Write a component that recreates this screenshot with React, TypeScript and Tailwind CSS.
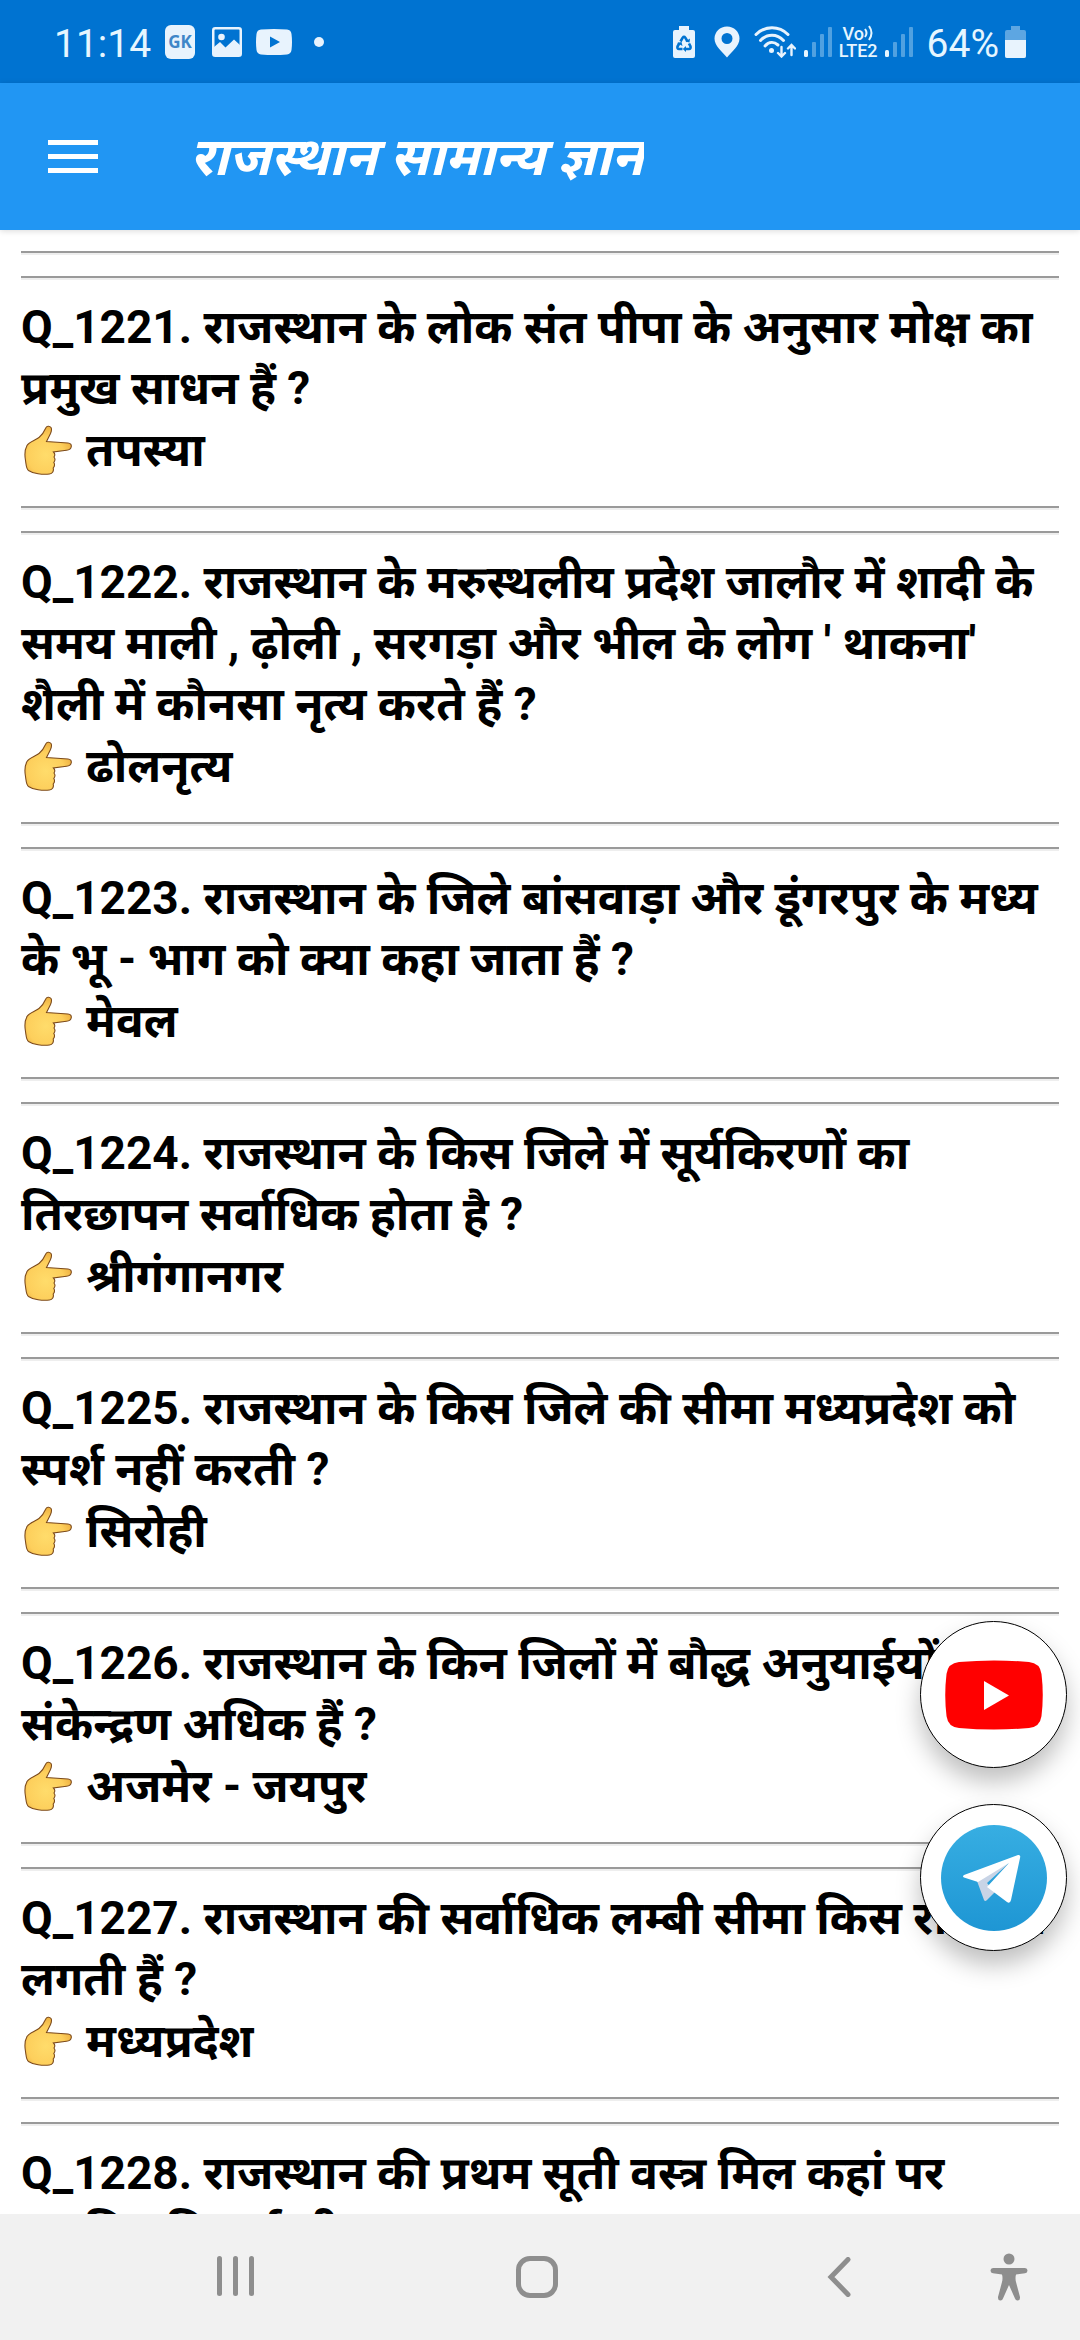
import type { ReactNode } from "react";

type Item = { no: number; q: string; a: string };

const items: Item[] = [
  { no: 1221, q: "राजस्थान के लोक संत पीपा के अनुसार मोक्ष का प्रमुख साधन हैं ?", a: "तपस्या" },
  { no: 1222, q: "राजस्थान के मरुस्थलीय प्रदेश जालौर में शादी के समय माली , ढ़ोली , सरगड़ा और भील के लोग ' थाकना' शैली में कौनसा नृत्य करते हैं ?", a: "ढोलनृत्य" },
  { no: 1223, q: "राजस्थान के जिले बांसवाड़ा और डूंगरपुर के मध्य के भू - भाग को क्या कहा जाता हैं ?", a: "मेवल" },
  { no: 1224, q: "राजस्थान के किस जिले में सूर्यकिरणों का तिरछापन सर्वाधिक होता है ?", a: "श्रीगंगानगर" },
  { no: 1225, q: "राजस्थान के किस जिले की सीमा मध्यप्रदेश को स्पर्श नहीं करती ?", a: "सिरोही" },
  { no: 1226, q: "राजस्थान के किन जिलों में बौद्ध अनुयाईयों का संकेन्द्रण अधिक हैं ?", a: "अजमेर - जयपुर" },
  { no: 1227, q: "राजस्थान की सर्वाधिक लम्बी सीमा किस राज्य से लगती हैं ?", a: "मध्यप्रदेश" },
  { no: 1228, q: "राजस्थान की प्रथम सूती वस्त्र मिल कहां पर स्थापित कि गई थी ?", a: "" },
];

function Rule() {
  return <hr className="h-1 border-0 border-t-2 border-b-2 border-t-[#9a9a9a] border-b-[#eeeeee]" />;
}

function Hand() {
  return (
    <svg role="img" aria-label="उत्तर" viewBox="0 0 50 50" className="ml-[3px] h-[50px] w-[50px] shrink-0">
      <defs>
        <radialGradient id="skin" cx="0.45" cy="0.6" r="0.6">
          <stop offset="0" stopColor="#ffdc6b" />
          <stop offset="0.65" stopColor="#fdcf5c" />
          <stop offset="1" stopColor="#eeb040" />
        </radialGradient>
      </defs>
      <path
        d="M21.500 3.500C22.500 0.800 25.500 0.500 27 2.500C28 4 27.500 6 26.500 8.500L22.500 16.500L44 18C46.500 18.200 47.500 19.800 47.300 21.500C47 24 45 25 42.500 25.200L29.500 27C31 28.500 31 30.500 30 32C31.500 34 31 36 29.800 37.500C31 39.500 30.500 41.500 29.200 43C30 46 28.500 48.700 25.500 49C18.500 50 9 48.500 4.500 45.500C2 43.500 2.200 39.500 1.500 35.500C0.500 30 0.800 24.500 3 20.500C5 17 11 15.500 15 12.500C18 10.200 20 7 21.500 3.500Z"
        fill="url(#skin)"
        stroke="#7d4b1c"
        strokeWidth="1.100"
      />
    </svg>
  );
}

function Bars() {
  return (
    <svg viewBox="0 0 28 32" className="h-8 w-7" fill="#e6f6ff" aria-hidden="true">
      <rect x="0" y="24" width="4" height="7" rx="1.500" />
      <g opacity="0.35">
        <rect x="8" y="16" width="4" height="15" rx="1" />
        <rect x="16" y="8" width="4" height="23" rx="1" />
        <rect x="24" y="1" width="4" height="30" rx="1" />
      </g>
    </svg>
  );
}

function StatusBar() {
  return (
    <div className="flex h-[83px] shrink-0 items-center justify-between bg-[#0073d1] px-[54px] text-[#e6f6ff]">
      <div className="flex items-center">
        <span className="mt-1 text-[39px] leading-[46px]">11:14</span>
        <span className="ml-[14px] flex h-[34px] w-[30px] items-center justify-center rounded-[6px] bg-[#e8f3fd] font-['Open_Sans'] text-[17px] leading-none font-bold text-[#3f86c8]">GK</span>
        <svg viewBox="0 0 30 30" className="ml-[17px] h-[30px] w-[30px]" aria-hidden="true">
          <rect x="1.250" y="1.250" width="27.500" height="27.500" rx="2" fill="none" stroke="#e8f3fd" strokeWidth="2.500" />
          <circle cx="9.500" cy="10" r="3.300" fill="#e8f3fd" />
          <path d="M2 20L8 15L13.500 20.500L22 12.500L28 18V28H2Z" fill="#e8f3fd" />
        </svg>
        <svg viewBox="0 0 36 26" className="ml-[14px] h-[26px] w-9" aria-hidden="true">
          <path fillRule="evenodd" fill="#e8f3fd" d="M5 0.600Q18 -0.500 31 0.600Q35 1 35.500 5Q36.500 13 35.500 21Q35 25 31 25.400Q18 26.500 5 25.400Q1 25 0.500 21Q-0.500 13 0.500 5Q1 1 5 0.600ZM14 7.500V18.500L24 13Z" />
        </svg>
        <span className="ml-[22px] h-[10px] w-[10px] rounded-full bg-[#e8f3fd]" />
      </div>
      <div className="flex items-center">
        <svg viewBox="0 0 22 32" className="h-8 w-[22px]" aria-hidden="true">
          <path d="M6 0H16V4H20Q22 4 22 6V30Q22 32 20 32H2Q0 32 0 30V6Q0 4 2 4H6Z" fill="#e8f3fd" />
          <g fill="none" stroke="#0073d1" strokeWidth="2.600">
            <path d="M7.500 15.500L9.700 11.700Q11 10 12.300 11.700L14.500 15.500" />
            <path d="M16 17.500L17.500 20.500Q18 23 16 23H12.500" />
            <path d="M9.500 23H6Q4 23 4.500 20.500L6.500 17" />
          </g>
          <path d="M12.500 15.500L16.500 16.500L17 12.500ZM13 20V26L9.800 23ZM4 17L8.500 16L9.500 20Z" fill="#0073d1" />
        </svg>
        <svg viewBox="0 0 26 32" className="ml-[19px] h-8 w-[26px]" aria-hidden="true">
          <path fillRule="evenodd" fill="#e8f3fd" d="M13 0.500C6 0.500 0.500 6 0.500 12.500C0.500 20 8 25.500 13 31.500C18 25.500 25.500 20 25.500 12.500C25.500 6 20 0.500 13 0.500ZM13 7A5.500 5.500 0 1 1 13 18A5.500 5.500 0 1 1 13 7Z" />
        </svg>
        <svg viewBox="0 0 42 32" className="ml-[14px] h-8 w-[42px]" aria-hidden="true" fill="none" stroke="#e8f3fd" strokeWidth="3" strokeLinecap="round">
          <path d="M2 8.500C11 -0.500 25 -0.500 34 8.500" />
          <path d="M6.500 14.500C13 7.500 23 7.500 29.500 14.500" />
          <path d="M11 20C15 15.500 20 15.500 24 19" />
          <circle cx="17.500" cy="24.500" r="2.500" fill="#e8f3fd" stroke="none" />
          <path d="M27.500 21V30M24 27L27.500 30.500L31 27M37.500 29V19.500M34 22.500L37.500 19L41 22.500" strokeWidth="2.400" />
        </svg>
        <span className="ml-2"><Bars /></span>
        <span className="ml-[7px] flex flex-col items-center text-[18px] leading-[17px] font-medium">
          <span className="flex items-center">
            Vo
            <svg viewBox="0 0 10 16" className="h-4 w-[10px]" fill="none" stroke="#e6f6ff" strokeWidth="2" aria-hidden="true">
              <path d="M1 4Q4 8 1 12M5 1Q10 8 5 15" />
            </svg>
          </span>
          <span>LTE2</span>
        </span>
        <span className="ml-[7px]"><Bars /></span>
        <span className="mt-1 ml-[14px] text-[39px] leading-[46px]">64%</span>
        <svg viewBox="0 0 21 32" className="ml-[6px] h-8 w-[21px]" aria-hidden="true">
          <path d="M6 0H15V4H19Q21 4 21 6V30Q21 32 19 32H2Q0 32 0 30V6Q0 4 2 4H6Z" fill="#e8f3fd" opacity="0.4" />
          <path d="M0 14H21V30Q21 32 19 32H2Q0 32 0 30Z" fill="#e8f3fd" />
        </svg>
      </div>
    </div>
  );
}

function Fab({ label, children }: { label: string; children: ReactNode }) {
  return (
    <a href="#" aria-label={label} className="flex h-[147px] w-[147px] items-center justify-center rounded-full border border-black bg-white shadow-[0_14px_24px_rgba(0,0,0,0.25)]">
      {children}
    </a>
  );
}

export default function App() {
  return (
    <div className="flex h-screen flex-col bg-white font-['Roboto','Noto_Sans_Devanagari','Noto_Sans',sans-serif] text-black">
      <StatusBar />
      <header className="z-10 flex h-[147px] shrink-0 items-center bg-[#2196f3] pl-12 text-white shadow-[0_1px_6px_rgba(0,0,0,0.15)]">
        <button aria-label="Menu" className="flex h-12 w-[50px] flex-col justify-center gap-[9px]">
          <span className="h-[5px] bg-white" />
          <span className="h-[5px] bg-white" />
          <span className="h-[5px] bg-white" />
        </button>
        <h1 className="ml-[92px] overflow-hidden text-[53px] leading-[70px] font-bold italic">राजस्थान सामान्य ज्ञान</h1>
      </header>
      <main className="relative min-h-0 flex-1">
        <div className="flex h-full flex-col gap-[25px] overflow-hidden px-[21px] pt-[21px] text-[46px] font-bold">
          {items.map((it) => (
            <article key={it.no} className="shrink-0">
              <div className="flex flex-col gap-[21px]">
                <Rule />
                <Rule />
              </div>
              <div className="mt-[17px]">
                <p className="-mr-2 leading-[61px]">{`Q_${it.no}. ${it.q}`}</p>
                {it.a && (
                  <p className="flex items-center leading-[62px]">
                    <Hand />
                    <span className="ml-3">{it.a}</span>
                  </p>
                )}
              </div>
            </article>
          ))}
        </div>
        <div className="absolute right-[13px] bottom-[263px] flex flex-col gap-9">
          <Fab label="YouTube">
            <svg viewBox="0 0 98 70" className="h-[70px] w-[98px]" aria-hidden="true">
              <path d="M14 2Q49 -1 84 2Q95 3 96.500 14Q99 35 96.500 56Q95 67 84 68Q49 71 14 68Q3 67 1.500 56Q-1 35 1.500 14Q3 3 14 2Z" fill="#ff0000" />
              <path d="M39 21V50L64 35.500Z" fill="#fff" />
            </svg>
          </Fab>
          <Fab label="Telegram">
            <svg viewBox="0 0 106 106" className="h-[106px] w-[106px]" aria-hidden="true">
              <defs>
                <linearGradient id="tg" x1="0" y1="0" x2="0" y2="1">
                  <stop offset="0" stopColor="#37aee2" />
                  <stop offset="1" stopColor="#1e96d4" />
                </linearGradient>
              </defs>
              <circle cx="53" cy="53" r="53" fill="url(#tg)" />
              <path d="M36 56L43 75Q44 77 46 75L54 67L46 58L69 37Z" fill="#c8d4e6" />
              <path d="M23 50L77 30Q80 29.500 79 33L70 75Q69 79 66 77L46 62L68 38L37 57L23 52.500Q21 51.500 23 50Z" fill="#fff" />
            </svg>
          </Fab>
        </div>
      </main>
      <nav className="relative flex h-[126px] shrink-0 items-center bg-[#f1f1f1]">
        <div className="grid flex-1 grid-cols-3 justify-items-center pr-[90px] pl-[84px]">
          <button aria-label="Recents" className="flex h-10 items-center gap-[11px]">
            <span className="h-10 w-[5px] rounded-full bg-[#8e8e8e]" />
            <span className="h-10 w-[5px] rounded-full bg-[#8e8e8e]" />
            <span className="h-10 w-[5px] rounded-full bg-[#8e8e8e]" />
          </button>
          <button aria-label="Home" className="h-[42px] w-[42px] rounded-[14px] border-[5px] border-[#8e8e8e]" />
          <button aria-label="Back">
            <svg viewBox="0 0 24 40" className="h-10 w-6" fill="none" stroke="#8e8e8e" strokeWidth="5" strokeLinecap="round" aria-hidden="true">
              <path d="M21 2.500L4 20L21 37.500" />
            </svg>
          </button>
        </div>
        <button aria-label="Accessibility" className="absolute right-[52px]">
          <svg viewBox="0 0 38 48" className="h-12 w-[38px]" fill="#8e8e8e" aria-hidden="true">
            <circle cx="19" cy="6" r="5.500" />
            <path d="M3 15H35Q37.500 15.200 37.500 17.500Q37.500 20 35 20.300L26 21.500Q25 25 26 29L30 44Q30.300 47 28 47.500Q25.700 47.800 25 45.500L19 32L13 45.500Q12.300 47.800 10 47.500Q7.700 47 8 44L12 29Q13 25 12 21.500L3 20.300Q0.500 20 0.500 17.500Q0.500 15.200 3 15Z" />
          </svg>
        </button>
      </nav>
    </div>
  );
}
